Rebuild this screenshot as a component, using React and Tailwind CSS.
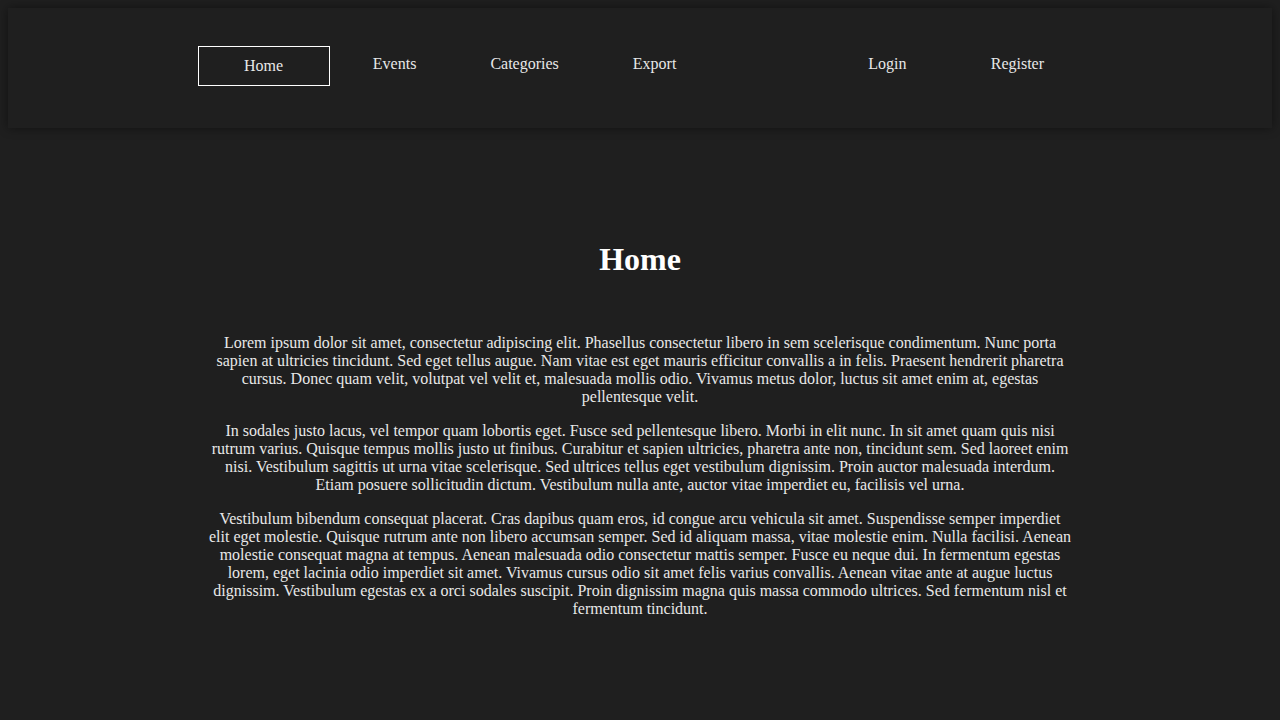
const leftLinks = ['Home', 'Events', 'Categories', 'Export'];
const rightLinks = ['Login', 'Register'];

const paragraphs = [
  'Lorem ipsum dolor sit amet, consectetur adipiscing elit. Phasellus consectetur libero in sem scelerisque condimentum. Nunc porta sapien at ultricies tincidunt. Sed eget tellus augue. Nam vitae est eget mauris efficitur convallis a in felis. Praesent hendrerit pharetra cursus. Donec quam velit, volutpat vel velit et, malesuada mollis odio. Vivamus metus dolor, luctus sit amet enim at, egestas pellentesque velit.',
  'In sodales justo lacus, vel tempor quam lobortis eget. Fusce sed pellentesque libero. Morbi in elit nunc. In sit amet quam quis nisi rutrum varius. Quisque tempus mollis justo ut finibus. Curabitur et sapien ultricies, pharetra ante non, tincidunt sem. Sed laoreet enim nisi. Vestibulum sagittis ut urna vitae scelerisque. Sed ultrices tellus eget vestibulum dignissim. Proin auctor malesuada interdum. Etiam posuere sollicitudin dictum. Vestibulum nulla ante, auctor vitae imperdiet eu, facilisis vel urna.',
  'Vestibulum bibendum consequat placerat. Cras dapibus quam eros, id congue arcu vehicula sit amet. Suspendisse semper imperdiet elit eget molestie. Quisque rutrum ante non libero accumsan semper. Sed id aliquam massa, vitae molestie enim. Nulla facilisi. Aenean molestie consequat magna at tempus. Aenean malesuada odio consectetur mattis semper. Fusce eu neque dui. In fermentum egestas lorem, eget lacinia odio imperdiet sit amet. Vivamus cursus odio sit amet felis varius convallis. Aenean vitae ante at augue luctus dignissim. Vestibulum egestas ex a orci sodales suscipit. Proin dignissim magna quis massa commodo ultrices. Sed fermentum nisl et fermentum tincidunt.',
];

function NavItem({ label, active }) {
  return (
    <a
      href="#"
      className={`flex w-[130px] items-center justify-center text-base ${
        active ? 'box-content h-[37px] border border-white pb-[1px]' : 'h-9'
      }`}
    >
      {label}
    </a>
  );
}

export default function App() {
  return (
    <div
      className="min-h-screen bg-[#1f1f1f] p-2 text-[#e8e8e8]"
      style={{ fontFamily: '"Liberation Serif", "Times New Roman", serif' }}
    >
      <nav className="h-[120px] bg-[#1f1f1f] pt-[38px] shadow-[0_0_10px_rgba(0,0,0,0.45)]">
        <div className="mx-auto flex w-[70%] items-start justify-between">
          <div className="flex">
            {leftLinks.map((l, i) => (
              <NavItem key={l} label={l} active={i === 0} />
            ))}
          </div>
          <div className="flex">
            {rightLinks.map((l) => (
              <NavItem key={l} label={l} />
            ))}
          </div>
        </div>
      </nav>

      <main className="mx-auto w-[864px] pt-[113px] text-center">
        <h1 className="text-[32px] font-bold leading-[37px] text-white">Home</h1>
        <div className="mt-[56px] flex flex-col gap-4 text-base leading-[18px]">
          {paragraphs.map((p, i) => (
            <p key={i}>{p}</p>
          ))}
        </div>
      </main>
    </div>
  );
}
